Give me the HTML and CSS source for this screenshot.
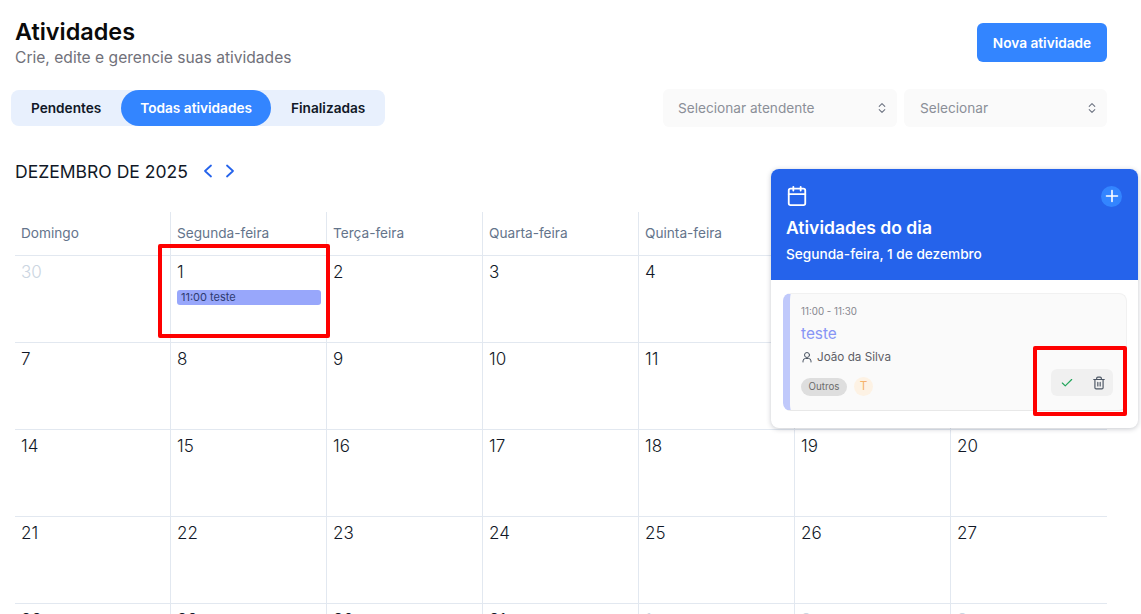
FILE: index.html
```html
<!DOCTYPE html>
<html lang="pt-BR">
<head>
    <meta charset="UTF-8">
    <meta name="viewport" content="width=device-width, initial-scale=1.0">
    <title>Atividades</title>
    <link rel="stylesheet" href="styles.css">
</head>
<body>
    <header class="page-header">
        <div>
            <h1>Atividades</h1>
            <p class="subtitle">Crie, edite e gerencie suas atividades</p>
        </div>
        <button class="btn-primary">Nova atividade</button>
    </header>

    <div class="toolbar">
        <div class="tabs">
            <span class="tab tab-first">Pendentes</span>
            <span class="tab tab-active">Todas atividades</span>
            <span class="tab tab-last">Finalizadas</span>
        </div>
        <div class="filters">
            <div class="select select-agent">
                <span>Selecionar atendente</span>
                <svg width="8" height="12" viewBox="0 0 10 14" fill="none" stroke="#6b7280" stroke-width="1.3" stroke-linecap="round" stroke-linejoin="round"><path d="M1.5 5 5 1.5 8.5 5M1.5 9 5 12.5 8.5 9"/></svg>
            </div>
            <div class="select select-other">
                <span>Selecionar</span>
                <svg width="8" height="12" viewBox="0 0 10 14" fill="none" stroke="#6b7280" stroke-width="1.3" stroke-linecap="round" stroke-linejoin="round"><path d="M1.5 5 5 1.5 8.5 5M1.5 9 5 12.5 8.5 9"/></svg>
            </div>
        </div>
    </div>

    <div class="month-nav">
        <h2>DEZEMBRO DE 2025</h2>
        <svg width="10" height="14" viewBox="0 0 10 14" fill="none" stroke="#2563eb" stroke-width="1.8" stroke-linecap="round" stroke-linejoin="round"><path d="M8 1.5 2 7l6 5.5"/></svg>
        <svg width="10" height="14" viewBox="0 0 10 14" fill="none" stroke="#2563eb" stroke-width="1.8" stroke-linecap="round" stroke-linejoin="round"><path d="M2 1.5 8 7l-6 5.5"/></svg>
    </div>

    <div class="calendar">
        <div class="weekday">Domingo</div>
        <div class="weekday">Segunda-feira</div>
        <div class="weekday">Terça-feira</div>
        <div class="weekday">Quarta-feira</div>
        <div class="weekday">Quinta-feira</div>
        <div class="weekday">Sexta-feira</div>
        <div class="weekday">Sábado</div>

        <div class="day muted">30</div>
        <div class="day">1<div class="event">11:00 teste</div></div>
        <div class="day">2</div>
        <div class="day">3</div>
        <div class="day">4</div>
        <div class="day">5</div>
        <div class="day">6</div>

        <div class="day">7</div>
        <div class="day">8</div>
        <div class="day">9</div>
        <div class="day">10</div>
        <div class="day">11</div>
        <div class="day">12</div>
        <div class="day">13</div>

        <div class="day">14</div>
        <div class="day">15</div>
        <div class="day">16</div>
        <div class="day">17</div>
        <div class="day">18</div>
        <div class="day">19</div>
        <div class="day">20</div>

        <div class="day">21</div>
        <div class="day">22</div>
        <div class="day">23</div>
        <div class="day">24</div>
        <div class="day">25</div>
        <div class="day">26</div>
        <div class="day">27</div>

        <div class="day">28</div>
        <div class="day">29</div>
        <div class="day">30</div>
        <div class="day">31</div>
        <div class="day muted">1</div>
        <div class="day muted">2</div>
        <div class="day muted">3</div>
    </div>

    <aside class="day-panel">
        <div class="panel-head">
            <div class="panel-icons">
                <svg width="22" height="22" viewBox="0 0 24 24" fill="none" stroke="#fff" stroke-width="2" stroke-linecap="round" stroke-linejoin="round"><rect x="3" y="4" width="18" height="18" rx="2"/><path d="M8 2v4M16 2v4M3 10h18"/></svg>
                <span class="panel-add">
                    <svg width="14" height="14" viewBox="0 0 14 14" fill="none" stroke="#fff" stroke-width="1.6" stroke-linecap="round"><path d="M7 1.5v11M1.5 7h11"/></svg>
                </span>
            </div>
            <h3>Atividades do dia</h3>
            <p>Segunda-feira, 1 de dezembro</p>
        </div>
        <div class="panel-body">
            <div class="activity">
                <div class="activity-time">11:00 - 11:30</div>
                <div class="activity-title">teste</div>
                <div class="activity-person">
                    <svg width="12" height="12" viewBox="0 0 24 24" fill="none" stroke="#4b5563" stroke-width="2" stroke-linecap="round" stroke-linejoin="round"><circle cx="12" cy="8" r="5"/><path d="M4 22v-2a5 5 0 0 1 5-5h6a5 5 0 0 1 5 5v2"/></svg>
                    <span>João da Silva</span>
                </div>
                <div class="activity-foot">
                    <div class="activity-tags">
                        <span class="tag">Outros</span>
                        <span class="avatar">T</span>
                    </div>
                    <div class="activity-actions">
                        <svg width="14" height="14" viewBox="0 0 24 24" fill="none" stroke="#22a55b" stroke-width="2" stroke-linecap="round" stroke-linejoin="round"><path d="M20 6 9 17l-5-5"/></svg>
                        <svg width="14" height="14" viewBox="0 0 24 24" fill="none" stroke="#4b5563" stroke-width="2" stroke-linecap="round" stroke-linejoin="round"><path d="M3 6h18M19 6v14a2 2 0 0 1-2 2H7a2 2 0 0 1-2-2V6M8 6V4a2 2 0 0 1 2-2h4a2 2 0 0 1 2 2v2M10 11v6M14 11v6"/></svg>
                    </div>
                </div>
            </div>
        </div>
    </aside>

    <!-- marcacoes vermelhas da captura -->
    <div class="mark mark-day"></div>
    <div class="mark mark-actions"></div>
</body>
</html>
```

FILE: styles.css
```css
* {
    margin: 0;
    padding: 0;
    box-sizing: border-box;
}

html, body {
    height: 100%;
    overflow: hidden;
}

body {
    position: relative;
    font-family: Inter, "Noto Sans", sans-serif;
    background-color: #fff;
    color: #111827;
    padding: 19px 34px 0 15px;
}

/* Header */
.page-header {
    display: flex;
    justify-content: space-between;
    align-items: flex-start;
    height: 71px;
}

h1 {
    font-size: 23.4px;
    line-height: 26px;
    font-weight: 600;
    color: #0a0a0a;
}

.subtitle {
    margin-top: 1px;
    font-size: 15.6px;
    line-height: 24px;
    color: #71717a;
}

.btn-primary {
    margin-top: 4px;
    width: 130px;
    height: 39px;
    border: none;
    border-radius: 6px;
    background-color: #3385ff;
    color: #fff;
    font-family: inherit;
    font-size: 13.65px;
    font-weight: 600;
}

/* Tabs and filters */
.toolbar {
    display: flex;
    justify-content: space-between;
    height: 36px;
}

.tabs {
    display: flex;
    align-items: center;
    height: 36px;
    margin-left: -4px;
    background-color: #e8f0fd;
    border-radius: 8px;
}

.tab {
    font-size: 13.65px;
    font-weight: 600;
    line-height: 36px;
    color: #111827;
}

.tab-first {
    padding: 0 20px;
}

.tab-active {
    padding: 0 19px;
    background-color: #3385ff;
    color: #fff;
    border-radius: 18px;
}

.tab-last {
    padding: 0 20px;
}

.filters {
    display: flex;
    gap: 7px;
    margin-top: -1px;
}

.select {
    display: flex;
    justify-content: space-between;
    align-items: center;
    height: 38px;
    padding: 0 11px 0 15px;
    background-color: #fafafa;
    border-radius: 6px;
    font-size: 13.65px;
    color: #8b8f98;
}

.select-agent {
    width: 234px;
}

.select-other {
    width: 203px;
    padding-left: 16px;
}

/* Month */
.month-nav {
    display: flex;
    align-items: center;
    gap: 12px;
    height: 24px;
    margin-top: 33px;
}

.month-nav h2 {
    font-size: 17.55px;
    font-weight: 400;
    color: #111827;
    margin-right: 3px;
}

/* Calendar */
.calendar {
    display: grid;
    grid-template-columns: 155px repeat(5, 156px) 157px;
    grid-template-rows: 44px repeat(5, 87px);
    margin-top: 29px;
    width: 1092px;
}

.weekday {
    padding: 13px 6px 0;
    font-size: 13.65px;
    line-height: 17px;
    color: #64748b;
    border-left: 1px solid #e2e8f0;
    border-bottom: 1px solid #e2e8f0;
}

.day {
    padding: 4px 6px 0;
    font-size: 17px;
    line-height: 24px;
    font-weight: 300;
    color: #111827;
    border-left: 1px solid #e2e8f0;
    border-bottom: 1px solid #e2e8f0;
}

.weekday:nth-child(7n+1), .day:nth-child(7n+1) {
    border-left: none;
}

.day.muted {
    color: #cbd5e1;
}

.event {
    height: 15px;
    margin: 6px -1px 0 0;
    padding-left: 4px;
    background-color: #98a7fb;
    border-radius: 3px;
    font-size: 11px;
    font-weight: 400;
    line-height: 15px;
    color: #2e3a70;
}

/* Popover */
.day-panel {
    position: absolute;
    left: 771px;
    top: 169px;
    width: 367px;
    height: 259px;
    background-color: #fff;
    border-radius: 8px;
    box-shadow: 0 1px 5px rgba(30, 41, 59, 0.25);
    overflow: hidden;
}

.panel-head {
    height: 111px;
    padding: 16px 15px;
    background-color: #2563eb;
    color: #fff;
}

.panel-icons {
    display: flex;
    justify-content: space-between;
    align-items: center;
    height: 22px;
}

.panel-add {
    display: flex;
    align-items: center;
    justify-content: center;
    width: 21px;
    height: 21px;
    margin-right: 1px;
    border-radius: 50%;
    background-color: #3385ff;
}

.panel-head h3 {
    margin-top: 8px;
    font-size: 17.55px;
    line-height: 26px;
    font-weight: 600;
}

.panel-head p {
    margin-top: 4px;
    font-size: 13.65px;
    line-height: 18px;
    font-weight: 500;
}

.panel-body {
    padding: 13px 11px 0 12px;
}

.activity {
    height: 118px;
    padding: 11px 13px 0 11px;
    background-color: #fafafa;
    border: 1px solid #f1f1f1;
    border-left: 7px solid #c0c9fb;
    border-bottom-color: #e8e8e8;
    border-radius: 8px;
}

.activity-time {
    font-size: 9.75px;
    line-height: 14px;
    color: #85858d;
}

.activity-title {
    margin-top: 4px;
    font-size: 15.4px;
    line-height: 22px;
    color: #8795f5;
}

.activity-person {
    display: flex;
    align-items: center;
    gap: 4px;
    margin-top: 4px;
    font-size: 11.7px;
    line-height: 16px;
    color: #5e5e66;
}

.activity-foot {
    display: flex;
    justify-content: space-between;
    align-items: flex-end;
    margin-top: 4px;
}

.activity-tags {
    display: flex;
    align-items: center;
    gap: 7px;
}

.tag {
    width: 46px;
    height: 18px;
    background-color: #dedede;
    border-radius: 9px;
    font-size: 9.75px;
    line-height: 17px;
    text-align: center;
    color: #6b6b6b;
}

.avatar {
    width: 19px;
    height: 19px;
    background-color: #fdf2e4;
    border-radius: 50%;
    font-size: 11.7px;
    line-height: 19px;
    text-align: center;
    color: #f6b26b;
}

.activity-actions {
    display: flex;
    justify-content: space-between;
    align-items: center;
    width: 62px;
    height: 27px;
    padding: 0 7px 0 9px;
    background-color: #f0f0f0;
    border-radius: 6px;
}

/* Red marks on the screenshot */
.mark {
    position: absolute;
    border: 4px solid #fe0000;
    border-radius: 2px;
}

.mark-day {
    left: 158px;
    top: 244px;
    width: 172px;
    height: 94px;
}

.mark-actions {
    left: 1033px;
    top: 346px;
    width: 94px;
    height: 70px;
}
```
